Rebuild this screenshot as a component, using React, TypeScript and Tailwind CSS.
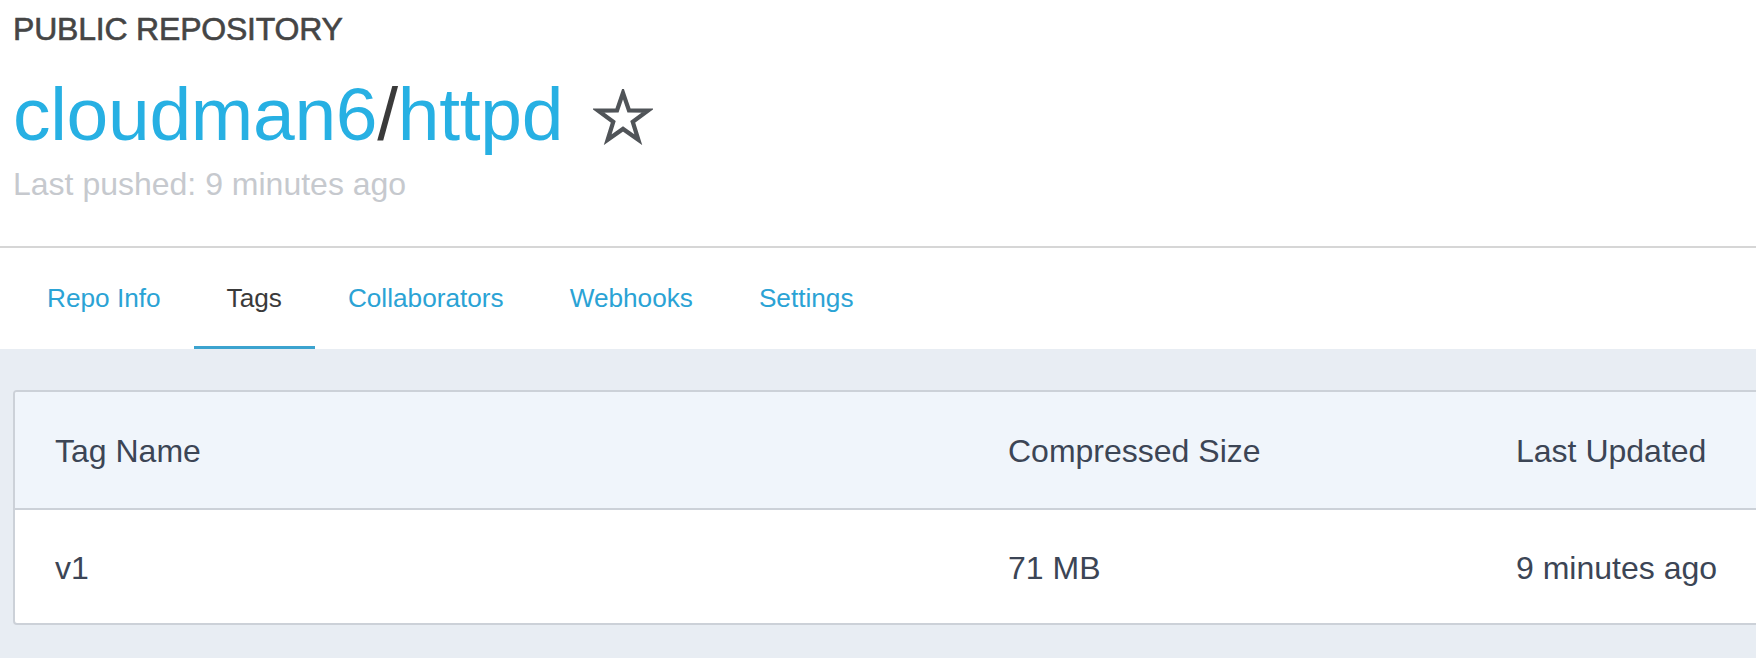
import React from "react";

const tabs = [
  { label: "Repo Info", active: false },
  { label: "Tags", active: true },
  { label: "Collaborators", active: false },
  { label: "Webhooks", active: false },
  { label: "Settings", active: false },
];

function StarOutline() {
  return (
    <svg width="60" height="56" viewBox="0 0 62 58" fill="none" aria-hidden="true">
      <polygon
        points="31,4 37.2,22.2 56.7,22.4 41.1,34 46.9,52.6 31,41.4 15.1,52.6 20.9,34 5.3,22.4 24.8,22.2"
        stroke="#505458"
        strokeWidth="4.4"
        strokeLinejoin="miter"
      />
    </svg>
  );
}

export default function App() {
  return (
    <div className="w-full h-[658px] overflow-hidden bg-white font-['Liberation_Sans',Arial,sans-serif]">
      {/* Repository header */}
      <div className="px-[13px] pt-[13px] pb-[46px]">
        <div className="text-[32px] leading-none text-[#454545] tracking-[-0.2px] [-webkit-text-stroke:0.6px_#454545]">
          PUBLIC REPOSITORY
        </div>
        <div className="mt-[32px] flex items-center gap-[30px]">
          <h1 className="text-[75px] leading-none text-[#27b0e3] tracking-[-0.3px]">
            cloudman6<span className="text-[#3a3a3a]">/</span>httpd
          </h1>
          <div className="mt-[4px]">
            <StarOutline />
          </div>
        </div>
        <div className="mt-[16px] text-[32px] leading-none text-[#c6c9ce]">Last pushed: 9 minutes ago</div>
      </div>

      {/* Tab navigation */}
      <nav className="border-t-2 border-[#d6d6d6] px-[14px] flex h-[103px]">
        {tabs.map((t) => (
          <div
            key={t.label}
            className={
              t.active
                ? "px-[33px] flex items-center border-b-[3px] border-[#3ca3cf] pt-[3px] text-[26.2px] text-[#3a3a3a]"
                : "px-[33px] flex items-center border-b-[3px] border-transparent pt-[3px] text-[26.2px] text-[#2ba3d5]"
            }
          >
            {t.label}
          </div>
        ))}
      </nav>

      {/* Tags table */}
      <div className="bg-[#e8edf3] h-full pt-[41px] pl-[13px]">
        <div className="w-[1800px] rounded-[4px] border-2 border-[#ccd1d8] bg-white overflow-hidden text-[32px] text-[#3c4555]">
          <div className="grid grid-cols-[953px_508px_1fr] items-center h-[118px] pl-[40px] pt-[2px] bg-[#f0f5fb] border-b-2 border-[#ccd1d8]">
            <div>Tag Name</div>
            <div>Compressed Size</div>
            <div>Last Updated</div>
          </div>
          <div className="grid grid-cols-[953px_508px_1fr] items-center h-[113px] pl-[40px] pt-[3px]">
            <div>v1</div>
            <div>71 MB</div>
            <div>9 minutes ago</div>
          </div>
        </div>
      </div>
    </div>
  );
}
